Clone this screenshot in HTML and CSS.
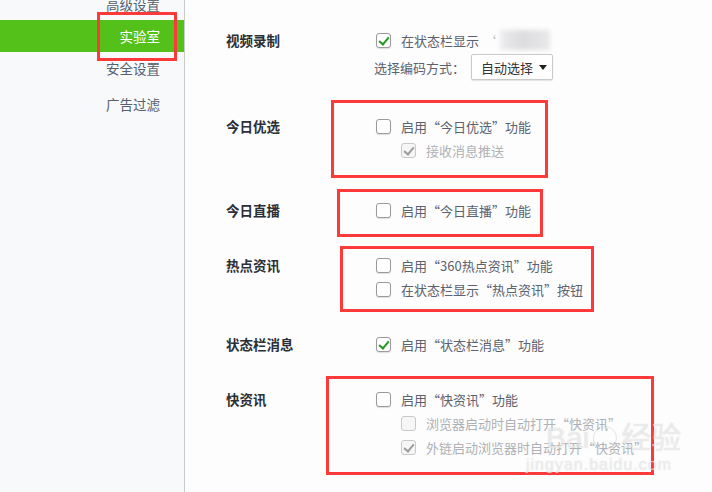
FILE: index.html
```html
<!DOCTYPE html>
<html lang="zh-CN">
<head>
    <meta charset="UTF-8">
    <title>实验室</title>
    <link rel="stylesheet" href="styles.css">
</head>
<body>
    <div class="page">
        <div class="sidebar">
            <div class="nav">
                <div class="nav-item">高级设置</div>
                <div class="nav-item active">实验室</div>
                <div class="nav-item">安全设置</div>
                <div class="nav-item nav-gap">广告过滤</div>
            </div>
        </div>

        <div class="main">
            <div class="section">
                <div class="label">视频录制</div>
                <div class="options">
                    <div class="opt"><span class="cb checked"></span>在状态栏显示 <span class="quote">‘</span><span class="blur"></span></div>
                    <div class="select-row">
                        选择编码方式：
                        <div class="select">自动选择<span class="caret"></span></div>
                    </div>
                </div>
            </div>

            <div class="section gap-lg">
                <div class="label">今日优选</div>
                <div class="options">
                    <div class="opt"><span class="cb"></span>启用“今日优选”功能</div>
                    <div class="opt sub disabled"><span class="cb checked"></span>接收消息推送</div>
                </div>
            </div>

            <div class="section gap-xl">
                <div class="label">今日直播</div>
                <div class="options">
                    <div class="opt"><span class="cb"></span>启用“今日直播”功能</div>
                </div>
            </div>

            <div class="section">
                <div class="label">热点资讯</div>
                <div class="options">
                    <div class="opt"><span class="cb"></span>启用“360热点资讯”功能</div>
                    <div class="opt"><span class="cb"></span>在状态栏显示“热点资讯”按钮</div>
                </div>
            </div>

            <div class="section">
                <div class="label">状态栏消息</div>
                <div class="options">
                    <div class="opt"><span class="cb checked"></span>启用“状态栏消息”功能</div>
                </div>
            </div>

            <div class="section">
                <div class="label">快资讯</div>
                <div class="options">
                    <div class="opt"><span class="cb"></span>启用“快资讯”功能</div>
                    <div class="opt sub disabled"><span class="cb"></span>浏览器启动时自动打开“快资讯”</div>
                    <div class="opt sub disabled"><span class="cb checked"></span>外链启动浏览器时自动打开“快资讯”</div>
                </div>
            </div>
        </div>

        <!-- annotation frames -->
        <div class="mark mark-nav"></div>
        <div class="mark mark-1"></div>
        <div class="mark mark-2"></div>
        <div class="mark mark-3"></div>
        <div class="mark mark-4"></div>

        <div class="watermark">
            <div class="wm-logo">Bai<span class="wm-paw"></span>经验</div>
            <div class="wm-url">jingyan.baidu.com</div>
        </div>
    </div>
</body>
</html>
```

FILE: styles.css
```css
body {
    margin: 0;
    font-family: "Noto Sans CJK SC", "Noto Sans", sans-serif;
    background: #fdfdfd;
}
.page {
    position: relative;
    display: flex;
    width: 712px;
    height: 492px;
    overflow: hidden;
}
.sidebar {
    width: 184px;
    flex-shrink: 0;
    background: #f7f9fb;
    border-right: 1px solid #c9c9c9;
}
.nav {
    margin-top: -12px;
}
.nav-item {
    height: 32px;
    line-height: 32px;
    text-align: right;
    padding-right: 24px;
    font-size: 13.5px;
    color: #56606e;
}
.nav-item.active {
    background: #54c11b;
    color: #fff;
}
.nav-gap {
    margin-top: 4px;
}
.main {
    flex: 1;
    padding: 28px 0 0 41px;
}
.section {
    display: flex;
    margin-top: 31px;
}
.section:first-child { margin-top: 0; }
.section.gap-lg { margin-top: 34px; }
.section.gap-xl { margin-top: 36px; }
.label {
    width: 150px;
    flex-shrink: 0;
    line-height: 24px;
    font-size: 13.5px;
    font-weight: bold;
    color: #2b2f36;
}
.opt {
    display: flex;
    align-items: center;
    height: 24px;
    font-size: 13px;
    color: #5b6270;
    white-space: nowrap;
}
.opt.sub {
    padding-left: 25px;
}
.opt.disabled {
    color: #aeb1b6;
}
.cb {
    box-sizing: border-box;
    width: 15px;
    height: 15px;
    margin-right: 10px;
    border: 1px solid #9a9a9a;
    border-radius: 3px;
    background: #fff;
    box-shadow: 0 1px 1px rgba(0,0,0,0.12);
    position: relative;
}
.cb.checked::after {
    content: "";
    position: absolute;
    left: 4px;
    top: 1px;
    width: 4px;
    height: 8px;
    border: solid #1e9a1e;
    border-width: 0 2px 2px 0;
    transform: rotate(40deg);
}
.disabled .cb {
    border-color: #c8c8c8;
    background: #f6f6f6;
    box-shadow: none;
}
.disabled .cb.checked::after {
    border-color: #9c9c9c;
}
.quote {
    margin-left: 4px;
    color: #bbb;
}
.blur {
    display: inline-block;
    width: 50px;
    height: 20px;
    margin-left: 4px;
    background: linear-gradient(90deg, #ececee 0%, #dcdcdf 45%, #e8e8ea 100%);
    filter: blur(2px);
}
.select-row {
    display: flex;
    align-items: center;
    margin-top: 2px;
    margin-left: -2px;
    font-size: 13px;
    color: #5b6270;
}
.select {
    box-sizing: border-box;
    display: flex;
    align-items: center;
    height: 26px;
    width: 82px;
    margin-left: 6px;
    padding-left: 9px;
    border: 1px solid #c9c9c9;
    border-radius: 2px;
    background: #fff;
    box-shadow: 0 1px 1px rgba(0,0,0,0.1);
    color: #333;
}
.caret {
    margin-left: 6px;
    width: 0;
    height: 0;
    border-left: 4px solid transparent;
    border-right: 4px solid transparent;
    border-top: 5px solid #222;
}
.mark {
    position: absolute;
    box-sizing: border-box;
    border: 3px solid #fc3a3a;
}
.mark-nav { left: 97px; top: 12px; width: 80px; height: 49px; }
.mark-1 { left: 331px; top: 100px; width: 217px; height: 78px; }
.mark-2 { left: 337px; top: 189px; width: 206px; height: 48px; }
.mark-3 { left: 340px; top: 246px; width: 254px; height: 66px; }
.mark-4 { left: 326px; top: 376px; width: 328px; height: 99px; }
.watermark {
    position: absolute;
    left: 546px;
    top: 420px;
    color: rgba(255,255,255,0.5);
    text-shadow: 0 0 1px rgba(170,170,170,0.5);
    pointer-events: none;
}
.wm-logo {
    display: flex;
    align-items: center;
    font-family: "Liberation Sans", "Noto Sans CJK SC", sans-serif;
    font-size: 30px;
    line-height: 36px;
    white-space: nowrap;
}
.wm-paw {
    width: 22px;
    height: 22px;
    margin: 0 4px;
    border-radius: 50%;
    border: 1px solid rgba(190,190,190,0.4);
}
.wm-url {
    font-family: "Liberation Sans", sans-serif;
    font-size: 16px;
    line-height: 18px;
    letter-spacing: 1px;
    margin-left: -20px;
}
```
